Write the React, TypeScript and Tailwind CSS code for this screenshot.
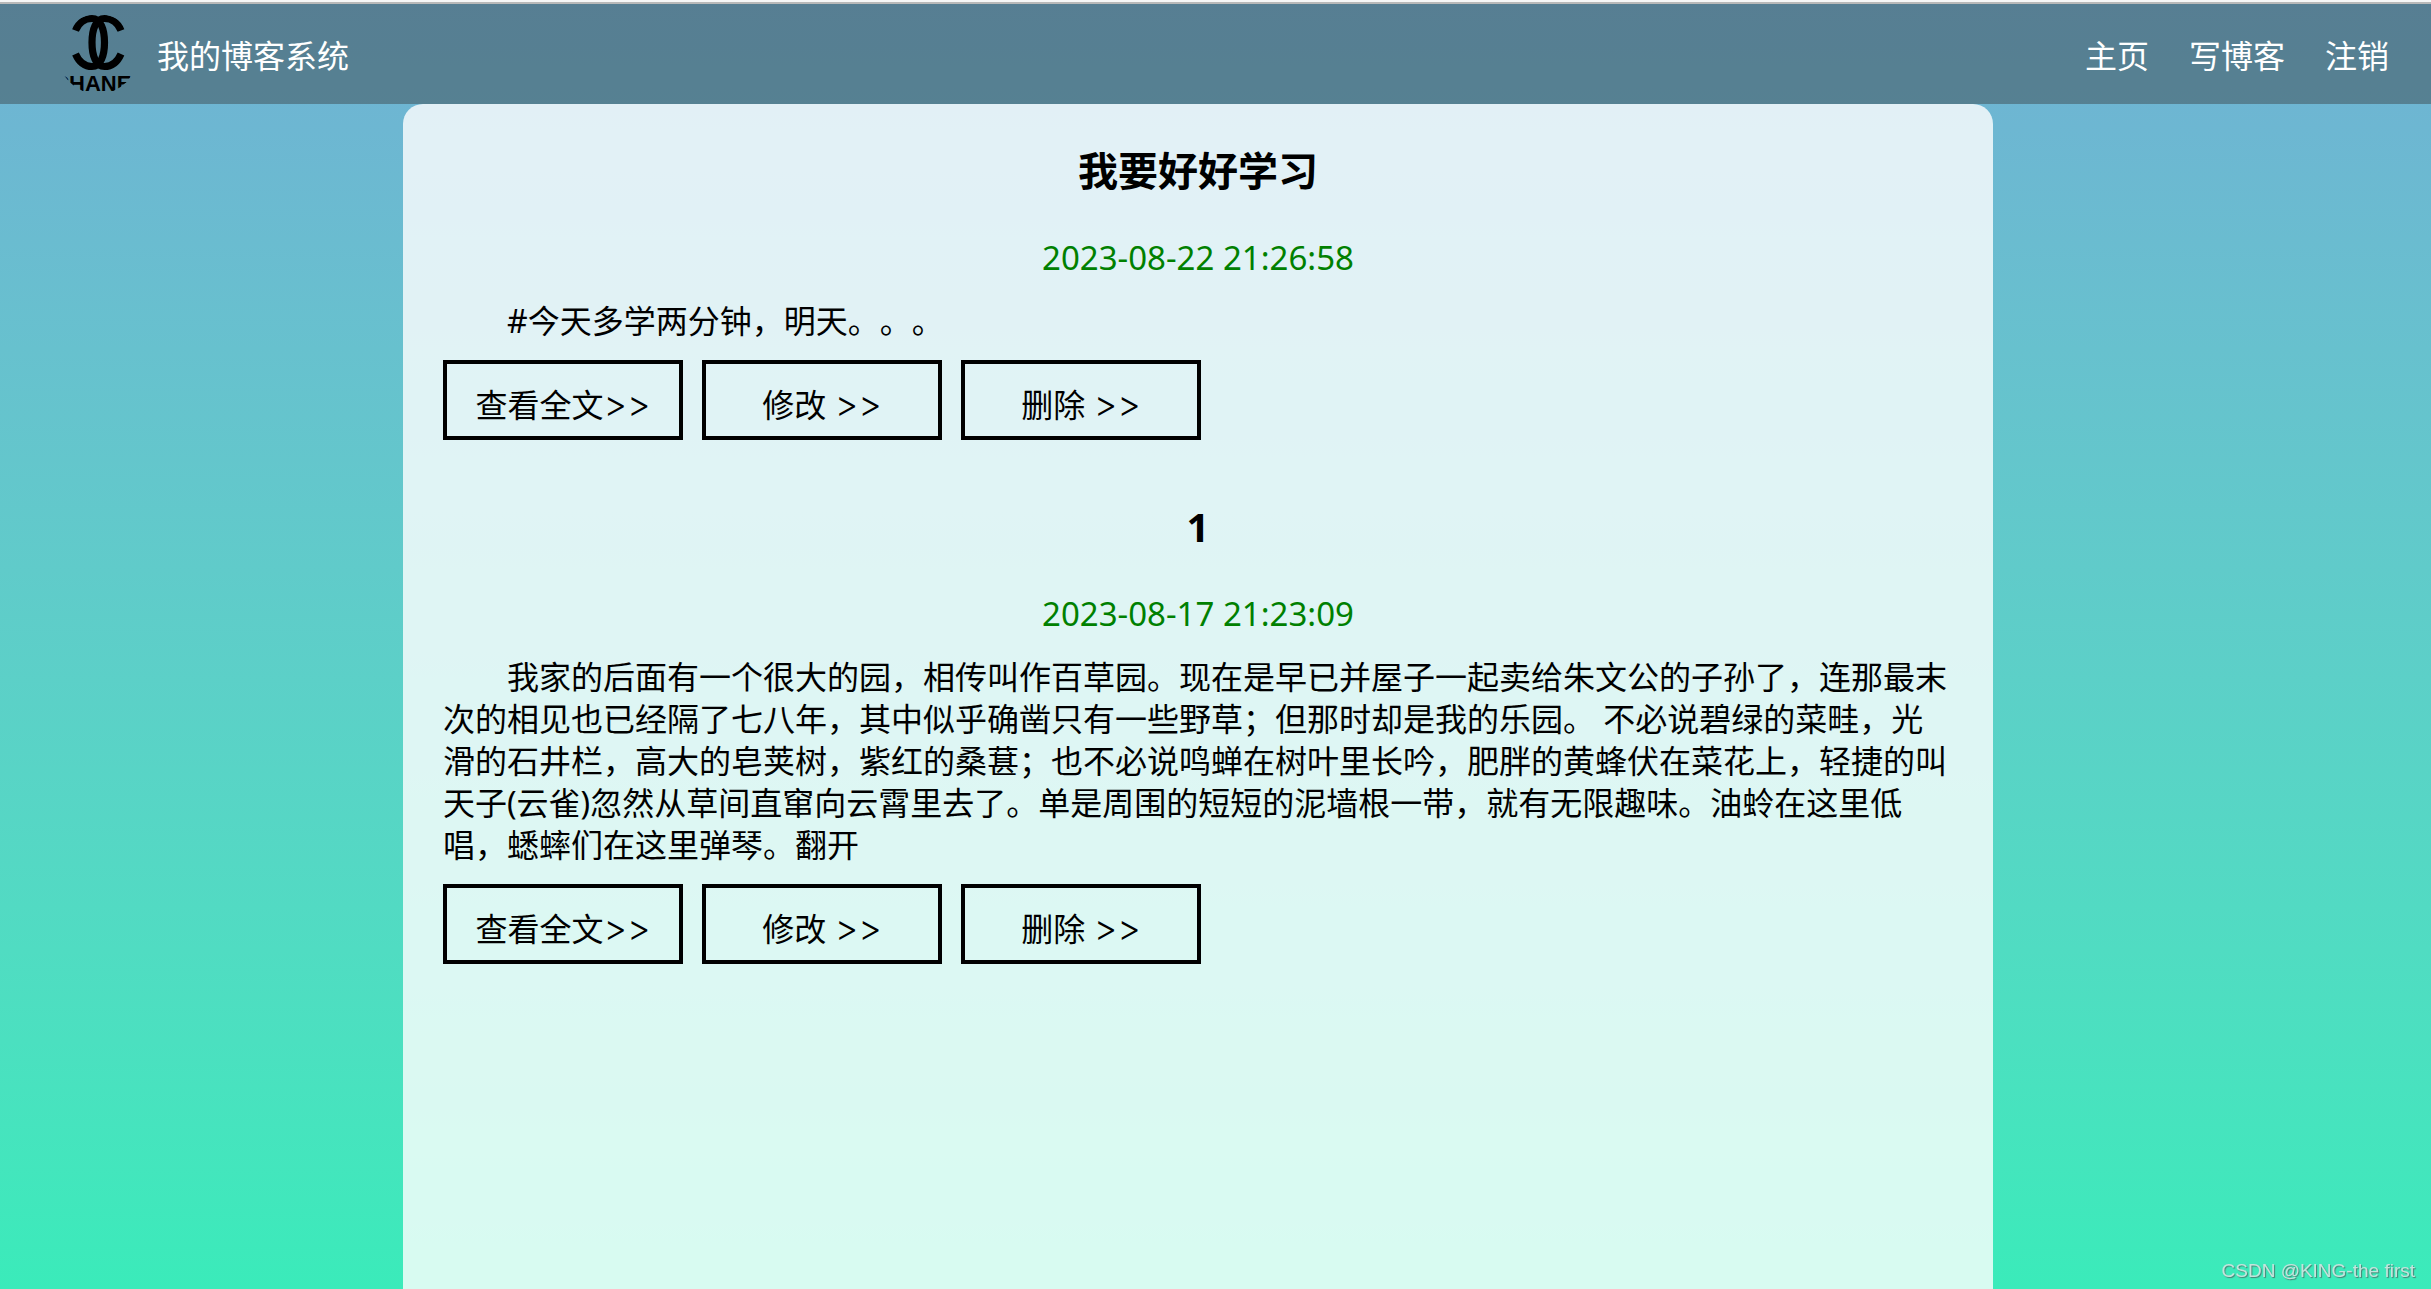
type Blog = {
  id: number;
  title: string;
  postTime: string;
  content: string;
};

const navLinks = [
  { label: '主页', href: '#home' },
  { label: '写博客', href: '#edit' },
  { label: '注销', href: '#logout' },
];

const blogs: Blog[] = [
  {
    id: 2,
    title: '我要好好学习',
    postTime: '2023-08-22 21:26:58',
    content: '#今天多学两分钟，明天。。。',
  },
  {
    id: 1,
    title: '1',
    postTime: '2023-08-17 21:23:09',
    content:
      '我家的后面有一个很大的园，相传叫作百草园。现在是早已并屋子一起卖给朱文公的子孙了，连那最末次的相见也已经隔了七八年，其中似乎确凿只有一些野草；但那时却是我的乐园。 不必说碧绿的菜畦，光滑的石井栏，高大的皂荚树，紫红的桑葚；也不必说鸣蝉在树叶里长吟，肥胖的黄蜂伏在菜花上，轻捷的叫天子(云雀)忽然从草间直窜向云霄里去了。单是周围的短短的泥墙根一带，就有无限趣味。油蛉在这里低唱，蟋蟀们在这里弹琴。翻开',
  },
];

function Logo() {
  return (
    <svg viewBox="0 0 80 80" className="h-20 w-20 shrink-0 rounded-full" role="img" aria-label="logo">
      <g fill="none" stroke="#000" strokeWidth="7.2">
        <path d="M17.5 16.5C21 8 28 4.500 34 4.500C42.500 4.500 46.500 15 46.500 28.500C46.500 42 42.500 52.500 34 52.500C27 52.500 21 48 17.500 40" />
        <path d="M63 16.500C59.500 8 52.500 4.500 46.500 4.500C38 4.500 34 15 34 28.500C34 42 38 52.500 46.500 52.500C53.500 52.500 59.500 48 63 40" />
      </g>
      <text x="41" y="77" textAnchor="middle" className="font-['Liberation_Sans',sans-serif] text-[22px] font-bold">
        CHANEL
      </text>
    </svg>
  );
}

function Arrows() {
  return <span className="font-['Inter',sans-serif] text-[36px] font-light">&gt;&gt;</span>;
}

function BlogItem({ blog }: { blog: Blog }) {
  const btn = 'h-20 w-60 border-4 border-black pt-2.5 text-center leading-[60px]';

  return (
    <article className="px-10 pt-[41px] pb-5">
      <h2 className="text-center text-[40px] leading-[52px] font-bold">{blog.title}</h2>
      <p className="mt-[39px] text-center text-[33px] leading-[44px] text-[#008000]">{blog.postTime}</p>
      <p className="mt-5 indent-16 leading-[42px]">{blog.content}</p>
      <div className="mt-[18px] flex gap-[19px]">
        <a href={`#detail-${blog.id}`} className={btn}>
          查看全文<Arrows />
        </a>
        <a href={`#update-${blog.id}`} className={btn}>
          修改 <Arrows />
        </a>
        <a href={`#delete-${blog.id}`} className={btn}>
          删除 <Arrows />
        </a>
      </div>
    </article>
  );
}

export default function App() {
  return (
    <div
      lang="zh-CN"
      className="flex min-h-screen flex-col border-t-2 border-[#f7f7f7] bg-linear-to-b from-[#70b1d4] to-[#3aebba] font-['Noto_Sans','Noto_Sans_CJK_SC',sans-serif] text-[32px] text-black [text-spacing-trim:space-all]"
    >
      {/* 导航栏 */}
      <nav className="flex h-[102px] items-center border-t-2 border-[#b9b9b9] bg-[#323232]/40 pr-[42px] pl-[58px] text-white">
        <Logo />
        <span className="ml-[19px] pt-1">我的博客系统</span>
        <div className="ml-auto flex gap-10 pt-1">
          {navLinks.map((link) => (
            <a key={link.href} href={link.href}>
              {link.label}
            </a>
          ))}
        </div>
      </nav>

      {/* 博客列表 */}
      <div className="flex flex-1 justify-center pr-[35px]">
        <main className="w-full max-w-[1590px] rounded-t-[20px] bg-white/80">
          {blogs.map((blog) => (
            <BlogItem key={blog.id} blog={blog} />
          ))}
        </main>
      </div>

      {/* 水印 */}
      <span className="fixed right-4 bottom-1 font-['Liberation_Sans',sans-serif] text-[19px] leading-7 text-[#c4e4dc] [text-shadow:1px_1px_1px_#4a7f72]">
        CSDN @KING-the first
      </span>
    </div>
  );
}
